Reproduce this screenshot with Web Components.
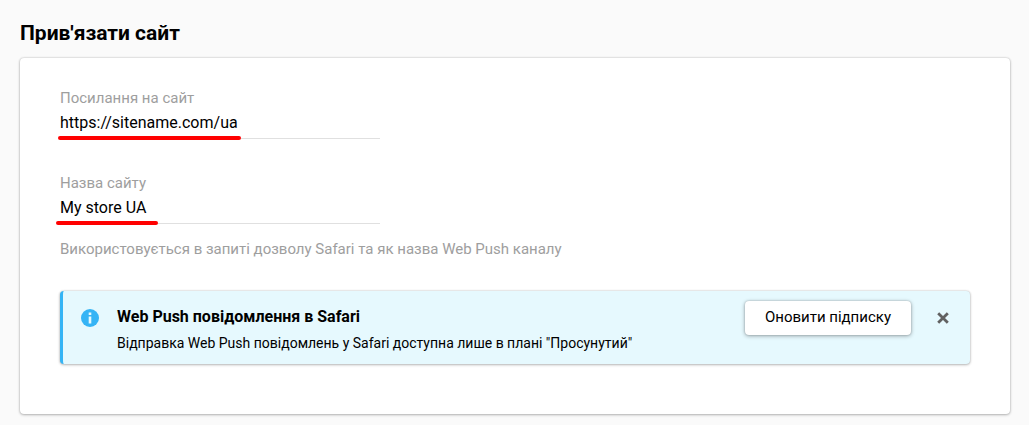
<!DOCTYPE html>
<html lang="uk">
<head>
<meta charset="utf-8">
<meta name="viewport" content="width=device-width, initial-scale=1">
<title>Прив'язати сайт</title>
<style>
    body {
        margin: 0;
        background: #fafafa;
        color: #000;
        font-family: Roboto, "Liberation Sans", sans-serif;
        font-size: 15px;
        line-height: 20px;
    }
</style>
</head>
<body>
<site-page heading="Прив'язати сайт">
    <site-card>
        <text-field label="Посилання на сайт" value="https://sitename.com/ua" style="--mark-start: -2px; --mark-width: 183px"></text-field>
        <text-field label="Назва сайту" value="My store UA" style="--mark-start: -4px; --mark-width: 102px">Використовується в запиті дозволу Safari та як назва Web Push каналу</text-field>
        <info-banner heading="Web Push повідомлення в Safari">
            Відправка Web Push повідомлень у Safari доступна лише в плані "Просунутий"
            <raised-button slot="action">Оновити підписку</raised-button>
        </info-banner>
    </site-card>
</site-page>

<script>
class SitePage extends HTMLElement {
    constructor() {
        super();
        this.attachShadow({mode: 'open'});
    }

    connectedCallback() {
        this.shadowRoot.innerHTML = `
        <style>
            :host {
                display: block;
                padding: 20px 19px 11px 20px;
            }

            h1 {
                margin: 0 0 12px;
                font-size: 21px;
                font-weight: 700;
                line-height: 26px;
            }
        </style>
        <h1></h1>
        <main><slot></slot></main>
        `;
        this.shadowRoot.querySelector('h1').textContent = this.getAttribute('heading');
    }
}

class SiteCard extends HTMLElement {
    constructor() {
        super();
        this.attachShadow({mode: 'open'});
    }

    connectedCallback() {
        this.shadowRoot.innerHTML = `
        <style>
            :host {
                display: flex;
                flex-direction: column;
                gap: 34px;
                padding: 30px 40px 50px;
                background: #fff;
                border-radius: 4px;
                box-shadow: 0 0 2px rgba(0, 0, 0, .24), 0 1px 3px rgba(0, 0, 0, .24);
            }
        </style>
        <slot></slot>
        `;
    }
}

class TextField extends HTMLElement {
    constructor() {
        super();
        this.attachShadow({mode: 'open'});
    }

    connectedCallback() {
        this.shadowRoot.innerHTML = `
        <style>
            :host {
                display: block;
            }

            label {
                display: block;
                color: #9e9e9e;
            }

            .control {
                position: relative;
                max-width: 320px;
            }

            /* red pen line under the value */
            .control::after {
                content: "";
                position: absolute;
                left: var(--mark-start);
                bottom: -1px;
                width: var(--mark-width);
                height: 4px;
                border-radius: 2px;
                background: #f00;
            }

            input {
                display: block;
                box-sizing: border-box;
                width: 100%;
                height: 31px;
                padding: 0 0 2px;
                border: 0;
                border-bottom: 1px solid #e0e0e0;
                border-radius: 0;
                outline: 0;
                background: transparent;
                color: inherit;
                font: inherit;
                font-size: 16px;
            }

            input:focus {
                border-bottom-color: #29b6f6;
            }

            .hint {
                margin: 17px 0 0;
                color: #9e9e9e;
                line-height: 16px;
            }
        </style>
        <label for="input"></label>
        <div class="control"><input id="input" type="text"></div>
        <p class="hint"><slot></slot></p>
        `;
        this.shadowRoot.querySelector('label').textContent = this.getAttribute('label');
        this.shadowRoot.querySelector('input').value = this.getAttribute('value');
        this.shadowRoot.querySelector('.hint').hidden = !this.textContent.trim();
    }
}

class RaisedButton extends HTMLElement {
    constructor() {
        super();
        this.attachShadow({mode: 'open'});
    }

    connectedCallback() {
        this.shadowRoot.innerHTML = `
        <style>
            :host {
                display: block;
            }

            button {
                display: block;
                height: 34px;
                padding: 0 20px 2px;
                border: 0;
                border-radius: 4px;
                background: #fff;
                color: inherit;
                font: inherit;
                white-space: nowrap;
                cursor: pointer;
                box-shadow: 0 0 2px rgba(0, 0, 0, .24), 0 1px 4px rgba(0, 0, 0, .32);
            }
        </style>
        <button type="button"><slot></slot></button>
        `;
    }
}

class InfoBanner extends HTMLElement {
    constructor() {
        super();
        this.attachShadow({mode: 'open'});
    }

    connectedCallback() {
        this.shadowRoot.innerHTML = `
        <style>
            :host {
                display: flex;
                align-items: flex-start;
                padding: 10px 16px 11px 18px;
                border-left: 3px solid #35b4f5;
                border-radius: 4px;
                background: #e6f9fe;
                box-shadow: 0 0 2px rgba(0, 0, 0, .24), 0 1px 3px rgba(0, 0, 0, .24);
            }

            .icon {
                flex: none;
                width: 18px;
                height: 34px;
                margin-right: 18px;
            }

            .text {
                flex: 1;
                min-width: 0;
                padding-top: 6px;
            }

            h2 {
                margin: 0 0 6px;
                font-size: 16px;
                font-weight: 700;
                line-height: 20px;
            }

            p {
                margin: 0;
                font-size: 14px;
            }

            .close {
                display: flex;
                align-items: center;
                justify-content: center;
                width: 22px;
                height: 34px;
                margin-left: 21px;
                padding: 0;
                border: 0;
                background: none;
                cursor: pointer;
            }
        </style>
        <svg class="icon" viewBox="0 0 18 34" aria-hidden="true">
            <circle cx="9" cy="17" r="9" fill="#35b4f5"/>
            <path fill="#e6f9fe" d="M7.700 11.500h2.600v2.500h-2.600zM7.700 15.500h2.600v7h-2.600z"/>
        </svg>
        <div class="text">
            <h2></h2>
            <p><slot></slot></p>
        </div>
        <slot name="action"></slot>
        <button class="close" type="button" aria-label="Закрити">
            <svg width="12" height="12" viewBox="0 0 12 12" aria-hidden="true">
                <path d="M1.200 1.200l9.600 9.600M10.800 1.200l-9.600 9.600" stroke="#616161" stroke-width="2.800"/>
            </svg>
        </button>
        `;
        this.shadowRoot.querySelector('h2').textContent = this.getAttribute('heading');
    }
}

window.customElements.define('site-page', SitePage);
window.customElements.define('site-card', SiteCard);
window.customElements.define('text-field', TextField);
window.customElements.define('raised-button', RaisedButton);
window.customElements.define('info-banner', InfoBanner);
</script>
</body>
</html>
